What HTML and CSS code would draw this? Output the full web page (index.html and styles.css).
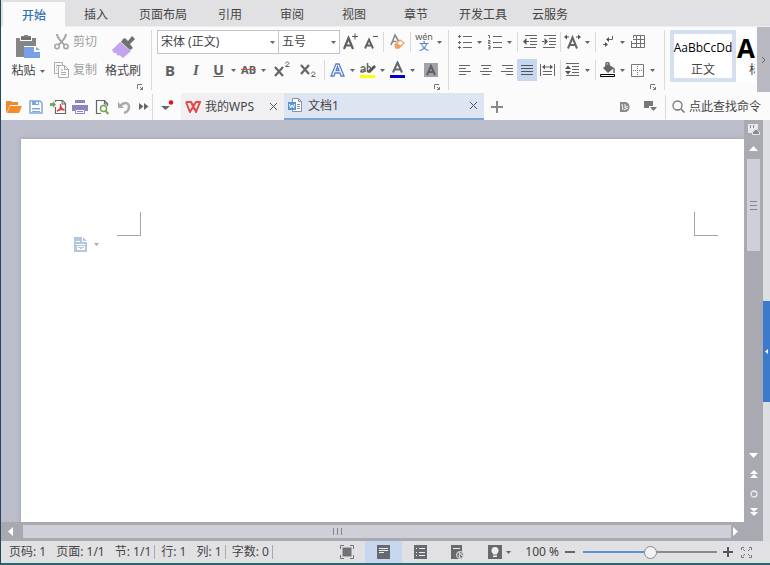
FILE: index.html
```html
<!DOCTYPE html>
<html lang="zh-CN">
<head>
<meta charset="utf-8">
<title>文档1</title>
<link rel="stylesheet" href="styles.css">
</head>
<body>
<svg class="defs" aria-hidden="true">
  <symbol id="caret" viewBox="0 0 5 3"><path d="M0 0h5L2.500 3z" fill="currentColor"/></symbol>
  <symbol id="launch" viewBox="0 0 6 6"><path d="M.5 5V.5H5M3 5.500H5.500V3M3 3l2.500 2.500" fill="none" stroke="#777"/></symbol>
  <symbol id="close" viewBox="0 0 9 9"><path d="M1 1l7 7M8 1L1 8" fill="none" stroke="#555"/></symbol>
</svg>

<nav class="tabs">
  <button class="tab active">开始</button>
  <button class="tab">插入</button>
  <button class="tab">页面布局</button>
  <button class="tab">引用</button>
  <button class="tab">审阅</button>
  <button class="tab">视图</button>
  <button class="tab">章节</button>
  <button class="tab">开发工具</button>
  <button class="tab">云服务</button>
</nav>

<section class="ribbon">
  <div class="group clipboard">
    <button class="big">
      <svg width="26" height="24" viewBox="0 0 26 24"><path d="M1 3h5V1h3V0h4v1h3v2h5v8H9v11H1z" fill="#858585"/><path d="M5 3h12v3H5z" fill="#fafafa"/><path d="M6 2h10v3H6z" fill="#707070"/><path d="M9 12h10l6 5v6H9z" fill="#78a0e8"/><path d="M19 11v6h6z" fill="#fff"/><path d="M21 12v3h4z" fill="#78a0e8"/></svg>
      <span class="label">粘贴 <svg class="caret"><use href="#caret"/></svg></span>
    </button>
    <div class="stack">
      <button class="small">
        <svg width="15" height="16" viewBox="0 0 15 16"><path d="M3 0c0 4 3 6 7.500 11M12 0c0 4-3 6-7.500 11" fill="none" stroke="#a3a3a3" stroke-width="2"/><circle cx="3" cy="12.500" r="2.200" fill="none" stroke="#a3a3a3" stroke-width="1.500"/><circle cx="12" cy="12.500" r="2.200" fill="none" stroke="#a3a3a3" stroke-width="1.500"/></svg>
        剪切
      </button>
      <button class="small">
        <svg width="15" height="16" viewBox="0 0 15 16"><path d="M4 11.500H.5V.5h8V3M4.500 3.500h6l4 4v8h-10zM10.500 3.500v4h4M7 8h2M7 10.500h5M7 12.500h5M2 3.500h4M2 5.500h1M2 8h1" fill="none" stroke="#aaa"/></svg>
        复制
      </button>
    </div>
    <button class="big">
      <svg width="24" height="24" viewBox="0 0 24 24"><path d="M12 4l2-1 3 3 4-5 3 3-5 5 3 4-3 2-9-8z" fill="#707070"/><path d="M9 7l11 9-8 7-4-3-1 1-2-3-2 0-2-3z" fill="#c3a5ee"/></svg>
      <span class="label">格式刷</span>
    </button>
    <button class="launcher" aria-label="剪贴板"><svg width="6" height="6"><use href="#launch"/></svg></button>
  </div>

  <div class="group font">
    <div class="row">
      <label class="combo family"><select aria-label="字体"><option>宋体 (正文)</option></select><svg class="caret"><use href="#caret"/></svg></label>
      <label class="combo size"><select aria-label="字号"><option>五号</option></select><svg class="caret"><use href="#caret"/></svg></label>
      <button class="tool" aria-label="增大字号"><svg width="16" height="18" viewBox="0 0 16 18"><path d="M2 16L6.500 5 11 16M3.500 12.500h6" fill="none" stroke="#606060" stroke-width="2.200"/><path d="M10 3.500h6M13 .5v6" stroke="#555"/></svg></button>
      <button class="tool" aria-label="减小字号"><svg width="16" height="18" viewBox="0 0 16 18"><path d="M3 15.500l4-9 4 9M4.500 12.500h5" fill="none" stroke="#606060" stroke-width="1.900"/><path d="M11 3.500h5" stroke="#555"/></svg></button>
      <i class="sep wide"></i>
      <button class="tool" aria-label="清除格式"><svg width="16" height="18" viewBox="0 0 16 18"><path d="M2 12L6 2l4 7M3.500 8.500h4" fill="none" stroke="#888" stroke-width="1.600"/><path d="M6 12l5-5 4 3-5 5-3 0z" fill="#fff" stroke="#eea060" stroke-width="1.300"/><path d="M6 12l2-2 4 3-2 2H7z" fill="#eea060"/></svg></button>
      <i class="sep wide"></i>
      <button class="tool pinyin"><span>wén</span><b>文</b></button>
      <button class="drop" aria-label="更多拼音"><svg class="caret"><use href="#caret"/></svg></button>
    </div>
    <div class="row">
      <button class="tool w26 bold">B</button>
      <button class="tool w26 italic">I</button>
      <button class="tool under">U</button>
      <button class="drop" aria-label="下划线"><svg class="caret"><use href="#caret"/></svg></button>
      <button class="tool strike">AB</button>
      <button class="drop" aria-label="删除线"><svg class="caret"><use href="#caret"/></svg></button>
      <button class="tool w26" aria-label="上标"><svg width="18" height="18" viewBox="0 0 18 18"><path d="M2 6l8 9M10 6l-8 9" stroke="#666" stroke-width="2.200"/><path d="M12.500 2.500c0-2 3.500-2 3.500 0 0 1-3.500 2-3.500 3H16.500" fill="none" stroke="#666"/></svg></button>
      <button class="tool w26" aria-label="下标"><svg width="18" height="18" viewBox="0 0 18 18"><path d="M2 4l8 9M10 4l-8 9" stroke="#666" stroke-width="2.200"/><path d="M12.500 12.500c0-2 3.500-2 3.500 0 0 1-3.500 2-3.500 3H16.500" fill="none" stroke="#666"/></svg></button>
      <i class="sep wide"></i>
      <button class="tool" aria-label="文字效果"><svg width="16" height="16" viewBox="0 0 16 16"><path d="M1 14L6 2h3l5 12h-3l-1-3H5l-1 3zM6 8.500h3L7.500 4.500z" fill="#fff" stroke="#557fce" stroke-width="1.300"/></svg></button>
      <button class="drop" aria-label="更多效果"><svg class="caret"><use href="#caret"/></svg></button>
      <button class="tool" aria-label="突出显示"><svg width="17" height="18" viewBox="0 0 17 18"><path d="M2 7c1-2 4-1.500 4 .5V11M6 8.500c-5 0-5 3-2.500 2.500 1.500 0 2.500-1 2.500-2M8.500 2v9M8.500 6c4-2 4 4 0 5" fill="none" stroke="#666" stroke-width="1.500"/><path d="M8 11l7-7 2 2-6 6z" fill="#555"/><path d="M1 14h15v3H1z" fill="#ff0"/></svg></button>
      <button class="drop" aria-label="突出显示颜色"><svg class="caret"><use href="#caret"/></svg></button>
      <button class="tool" aria-label="字体颜色"><svg width="17" height="18" viewBox="0 0 17 18"><path d="M4 11.500L8.500 1.500l4.500 10M5.500 8.500h6" fill="none" stroke="#666" stroke-width="2"/><path d="M1 14h15v3H1z" fill="#0000c8"/></svg></button>
      <button class="drop" aria-label="更多颜色"><svg class="caret"><use href="#caret"/></svg></button>
      <button class="tool w26" aria-label="字符底纹"><svg width="14" height="14" viewBox="0 0 14 14"><path d="M0 0h14v14H0z" fill="#a2a3a6"/><path d="M3 12l4-9 4 9M4.500 9h5" fill="none" stroke="#606064" stroke-width="2"/></svg></button>
    </div>
    <button class="launcher" aria-label="字体设置"><svg width="6" height="6"><use href="#launch"/></svg></button>
  </div>

  <div class="group para">
    <div class="row">
      <button class="tool" aria-label="项目符号"><svg width="16" height="16" viewBox="0 0 16 16"><path d="M6 2.500h9M6 8.500h9M6 13.500h9" stroke="#666"/><path d="M1 2.500h3M2.500 1v3M1 8.500h3M2.500 7v3M1 13.500h3M2.500 12v3" stroke="#666"/></svg></button>
      <button class="drop" aria-label="更多符号"><svg class="caret"><use href="#caret"/></svg></button>
      <button class="tool" aria-label="编号"><svg width="16" height="16" viewBox="0 0 16 16"><path d="M6 2.500h9M6 8.500h9M6 13.500h9" stroke="#666"/><path d="M1 1.500h1.500V4M1 6.500h2v1.500H1.500v1.500H3.500M1 11.500h2v3.500H1M1.500 13.500H3" fill="none" stroke="#666"/></svg></button>
      <button class="drop" aria-label="更多编号"><svg class="caret"><use href="#caret"/></svg></button>
      <i class="sep"></i>
      <button class="tool" aria-label="减少缩进"><svg width="14" height="14" viewBox="0 0 14 14"><path d="M2 .5h12M7 3.500h7M7 6.500h7M7 9.500h7M1 12.500h12" stroke="#666"/><path d="M0 6.500L3.500 3v7zM3 6h3v1H3z" fill="#555"/></svg></button>
      <button class="tool" aria-label="增加缩进"><svg width="14" height="14" viewBox="0 0 14 14"><path d="M2 .5h12M7 3.500h7M7 6.500h7M7 9.500h7M1 12.500h12" stroke="#666"/><path d="M6 6.500L2.500 3v7zM0 6h3v1H0z" fill="#555"/></svg></button>
      <i class="sep"></i>
      <button class="tool" aria-label="字符缩放"><svg width="17" height="16" viewBox="0 0 17 16"><path d="M4 14.500L8.500 3.500 13 14.500M5.500 11h6" fill="none" stroke="#666" stroke-width="2"/><path d="M0 3l3-2.500v5zM3 2.500h2v1H3zM17 3l-3-2.500v5zM12 2.500h2v1h-2z" fill="#555"/></svg></button>
      <button class="drop" aria-label="更多缩放"><svg class="caret"><use href="#caret"/></svg></button>
      <i class="sep"></i>
      <button class="tool" aria-label="显示标记"><svg width="12" height="14" viewBox="0 0 12 14"><path d="M10.500 1v3.500H6M1 9.500h4" fill="none" stroke="#666"/><path d="M4 4.500L7 2v5zM6 9.500L3 7v5z" fill="#555"/></svg></button>
      <button class="drop" aria-label="更多标记"><svg class="caret"><use href="#caret"/></svg></button>
      <button class="tool" aria-label="制表位"><svg width="14" height="14" viewBox="0 0 14 14"><path d="M2.500 3V.5h11v12H1M5.500 .5v12M9.500 .5v12M2 4.500h11.500M.5 8.500h13M.5 6v7" fill="none" stroke="#707070"/></svg></button>
    </div>
    <div class="row">
      <button class="tool w20" aria-label="左对齐"><svg width="14" height="12" viewBox="0 0 14 12"><path d="M1 1.500h11M1 4.500h7M1 7.500h12M1 10.500h7" stroke="#666"/></svg></button>
      <button class="tool w21" aria-label="居中"><svg width="14" height="12" viewBox="0 0 14 12"><path d="M2 1.500h10M4 4.500h6M1 7.500h12M3 10.500h8" stroke="#666"/></svg></button>
      <button class="tool w21" aria-label="右对齐"><svg width="14" height="12" viewBox="0 0 14 12"><path d="M2 1.500h11M6 4.500h7M1 7.500h12M6 10.500h7" stroke="#666"/></svg></button>
      <button class="tool w20 on" aria-label="两端对齐"><svg width="14" height="12" viewBox="0 0 14 12"><path d="M1 1.500h12M1 4.500h12M1 7.500h12M1 10.500h12" stroke="#555"/></svg></button>
      <button class="tool w21" aria-label="分散对齐"><svg width="15" height="12" viewBox="0 0 15 12"><path d="M.5 0v12M14.500 0v12M3 7.500h9M3 10.500h9M4 3h7" stroke="#666"/><path d="M2 3l3-2.500v5zM13 3l-3-2.500v5z" fill="#555"/></svg></button>
      <i class="sep"></i>
      <button class="tool" aria-label="行距"><svg width="15" height="14" viewBox="0 0 15 14"><path d="M1 .5h13M7 3.500h7M7 6.500h7M7 9.500h7M1 12.500h13" stroke="#666"/><path d="M0 6l3-3.500L6 6zM0 8h6l-3 3.500z" fill="#555"/></svg></button>
      <button class="drop" aria-label="更多行距"><svg class="caret"><use href="#caret"/></svg></button>
      <i class="sep"></i>
      <button class="tool" aria-label="底纹颜色"><svg width="16" height="16" viewBox="0 0 16 16"><path d="M3 6l5-4 6 4-6 5z" fill="#666"/><path d="M6 5V2c0-2 3-2 3 0v3M14 6v5" fill="none" stroke="#666" stroke-width="1.500"/><path d="M.5 12.500h14v2H.5z" fill="#fff" stroke="#000"/></svg></button>
      <button class="drop" aria-label="更多底纹"><svg class="caret"><use href="#caret"/></svg></button>
      <button class="tool" aria-label="边框"><svg width="13" height="13" viewBox="0 0 13 13"><path d="M.5.5h12v12H.5z" fill="none" stroke="#777"/><path d="M6.500 2v9M2 6.500h9" stroke="#777" stroke-dasharray="1 1"/></svg></button>
      <button class="drop" aria-label="更多边框"><svg class="caret"><use href="#caret"/></svg></button>
    </div>
    <button class="launcher" aria-label="段落设置"><svg width="6" height="6"><use href="#launch"/></svg></button>
  </div>

  <div class="styles">
    <button class="style selected"><span class="sample">AaBbCcDd</span><span>正文</span></button>
    <button class="style title"><span class="sample">A</span><span class="name">标题</span></button>
  </div>
  <button class="more" aria-label="更多"><svg width="5" height="8" viewBox="0 0 5 8"><path d="M1 1l3 3-3 3" fill="none" stroke="#666"/></svg></button>
</section>

<section class="quick">
  <button aria-label="打开"><svg width="16" height="14" viewBox="0 0 16 14"><path d="M0 13V1h5l1 1h6v3H4L1 12z" fill="#ee8a2b"/><path d="M4 6h12l-3 7H1z" fill="#f28c2c"/></svg></button>
  <button aria-label="保存"><svg width="14" height="14" viewBox="0 0 14 14"><path d="M1 1h10l2 2v10H1z" fill="#fff" stroke="#82a6dc" stroke-width="1.500"/><path d="M3 1h7v4H3zM3 8h8v1.500H3zM3 11h8v1H3z" fill="#82a6dc"/><path d="M7 2h2v2H7z" fill="#fff"/></svg></button>
  <button aria-label="输出为PDF"><svg width="17" height="16" viewBox="0 0 17 16"><path d="M5.500 3V1.500h7l3 3v10h-10V8" fill="#fff" stroke="#666" stroke-width="1.200"/><path d="M12 1v4h4" fill="none" stroke="#666"/><path d="M0 4h3V2l3 3.500L3 9V7H0z" fill="#74a558"/><path d="M7 12c3-1 4-4 3.500-7 0 3 1 5 4 6-3-1-5-.5-7.500 1z" fill="none" stroke="#e03c3c" stroke-width="1.400"/></svg></button>
  <button aria-label="打印"><svg width="16" height="14" viewBox="0 0 16 14"><path d="M3 0h10v3H3zM0 5h16v6h-3V9H3v2H0z" fill="#8e82c5"/><path d="M3.500 9.500h9v4h-9z" fill="#fff" stroke="#8e82c5"/><path d="M5 11.500h6" stroke="#8e82c5"/></svg></button>
  <button aria-label="打印预览"><svg width="15" height="16" viewBox="0 0 15 16"><path d="M6 14.500H1.500V1.500h8l3 3V7M9.500 1v4H13" fill="none" stroke="#666" stroke-width="1.200"/><circle cx="8.500" cy="9.500" r="3" fill="#fff" stroke="#70a850" stroke-width="1.500"/><path d="M10.500 12l3 3" stroke="#70a850" stroke-width="2"/></svg></button>
  <button aria-label="撤销"><svg width="14" height="14" viewBox="0 0 14 14"><path d="M3 6c5-5 9-3 9 1 0 3-2 5-5 6" fill="none" stroke="#aaa" stroke-width="2.500"/><path d="M1 2v6h6z" fill="#aaa"/></svg></button>
  <button class="narrow" aria-label="更多命令"><svg width="10" height="7" viewBox="0 0 10 7"><path d="M0 0l4.500 3.500L0 7zM5 0l4.500 3.500L5 7z" fill="#666"/></svg></button>
  <i class="sep"></i>
  <button class="notice" aria-label="自定义"><svg width="14" height="14" viewBox="0 0 14 14"><path d="M1 6h9L5.500 10z" fill="#666"/><circle cx="11" cy="2.500" r="2.200" fill="#e80c14"/></svg></button>
  <div class="doc home"><svg width="16" height="12" viewBox="0 0 16 12"><path d="M1 1h5l3.500 7.500M1 1l4 10L11 1h4l-4 10L7 2" fill="none" stroke="#e34a4f" stroke-width="2"/></svg><a href="#">我的WPS</a><button class="x" aria-label="关闭我的WPS"><svg width="9" height="9"><use href="#close"/></svg></button></div>
  <div class="doc current"><svg width="15" height="15" viewBox="0 0 15 15"><path d="M4.500 4V.5h6l3 3v10h-9V12M10.500 .5v3h3M9 6.500h3M9 8.500h3M9 10.500h3" fill="#fff" stroke="#8592a5"/><path d="M0 4h8v8H0z" fill="#5a94d4"/><path d="M1.500 6l1 4L4 7l1.500 3 1-4" fill="none" stroke="#fff"/></svg><a href="#">文档1</a><button class="x" aria-label="关闭文档1"><svg width="9" height="9"><use href="#close"/></svg></button></div>
  <button class="add" aria-label="新建"><svg width="12" height="12" viewBox="0 0 12 12"><path d="M0 6h12M6 0v12" stroke="#888" stroke-width="2"/></svg></button>
  <div class="search">
    <button class="mini" aria-label="云文档"><svg width="10" height="10" viewBox="0 0 10 10"><path d="M0 0h5c6 0 6 10 0 10H0z" fill="#888"/><path d="M2 2l1 6M5 2v4l3-2M4 8l4-2" fill="none" stroke="#fff"/></svg></button>
    <button class="mini" aria-label="界面"><svg width="13" height="11" viewBox="0 0 13 11"><path d="M0 0h9v5H5v2H0zM6 6h7l-3.500 4z" fill="#777"/></svg></button>
    <i class="sep"></i>
    <svg width="13" height="13" viewBox="0 0 13 13"><circle cx="5.500" cy="5.500" r="4.500" fill="none" stroke="#777" stroke-width="1.300"/><path d="M9 9l3.500 3.500" stroke="#777" stroke-width="1.500"/></svg>
    <a href="#">点此查找命令</a>
  </div>
</section>

<main class="work">
  <div class="pane">
    <div class="view">
      <div class="canvas">
        <article class="page">
          <div class="corners"><i class="corner left"></i><i class="corner right"></i></div>
          <button class="paste" aria-label="段落布局"><svg width="13" height="15" viewBox="0 0 13 15"><path d="M0 0h9l4 4v11H0z" fill="#b5c7dc"/><path d="M8.500 0v4.500H13M2 4.500h4M2 7.500h9M4 11.500h2M8 11.500h3" fill="none" stroke="#fff"/><path d="M3.500 9.500h7v3h-7z" fill="none" stroke="#fff"/></svg><svg class="caret"><use href="#caret"/></svg></button>
        </article>
      </div>
      <div class="vbar">
        <button aria-label="标尺"><svg width="12" height="11" viewBox="0 0 12 11"><path d="M0 0h10v5H8L5 7v2H0z" fill="#e8e8ee"/><path d="M2.500 1v3M5.500 1v3" stroke="#888"/><path d="M8 5l3.500 3v2.500h-7V8z" fill="#888" stroke="#e8e8ee"/></svg></button>
        <button aria-label="向上"><svg width="9" height="5" viewBox="0 0 9 5"><path d="M0 5h9L4.500 0z" fill="#fff"/></svg></button>
        <div class="vthumb"><svg width="7" height="9" viewBox="0 0 7 9"><path d="M0 .5h7M0 4.500h7M0 8.500h7" stroke="#85868c"/></svg></div>
        <div class="vend">
          <button aria-label="向下"><svg width="9" height="5" viewBox="0 0 9 5"><path d="M0 0h9L4.500 5z" fill="#fff"/></svg></button>
          <button aria-label="上一页"><svg width="8" height="9" viewBox="0 0 8 9"><path d="M0 4h8L4 0zM0 8h8L4 4z" fill="#fff"/></svg></button>
          <button aria-label="选择浏览对象"><svg width="8" height="8" viewBox="0 0 8 8"><circle cx="4" cy="4" r="3" fill="none" stroke="#eee" stroke-width="1.300"/></svg></button>
          <button aria-label="下一页"><svg width="8" height="9" viewBox="0 0 8 9"><path d="M0 0h8L4 4zM0 4h8L4 8z" fill="#fff"/></svg></button>
        </div>
      </div>
    </div>
    <div class="hbar">
      <button aria-label="向左"><svg width="5" height="9" viewBox="0 0 5 9"><path d="M5 0v9L0 4.500z" fill="#fff"/></svg></button>
      <div class="hthumb"><svg width="9" height="7" viewBox="0 0 9 7"><path d="M.5 0v7M4.500 0v7M8.500 0v7" stroke="#85868c"/></svg></div>
      <button class="next" aria-label="向右"><svg width="5" height="9" viewBox="0 0 5 9"><path d="M0 0v9l5-4.500z" fill="#fff"/></svg></button>
    </div>
  </div>
  <aside class="side"><button aria-label="展开任务窗格"><svg width="3" height="5" viewBox="0 0 3 5"><path d="M3 0v5L0 2.500z" fill="#fff"/></svg></button></aside>
</main>

<footer class="status">
  <div class="info">
    <span>页码: 1</span><span>页面: 1/1</span><span class="end">节: 1/1</span><span>行: 1</span><span class="end">列: 1</span><span class="end">字数: 0</span>
  </div>
  <div class="modes">
    <button aria-label="全屏显示"><svg width="14" height="14" viewBox="0 0 14 14"><path d="M2.500 2.500h9v9h-9z" fill="#707274"/><path d="M.5 4V.5H4M10 .5h3.500V4M.5 10v3.500H4M10 13.500h3.500V10" fill="none" stroke="#707274"/></svg></button>
    <button class="on" aria-label="页面视图"><svg width="13" height="14" viewBox="0 0 13 14"><path d="M0 0h13v14H0z" fill="#66696e"/><path d="M2 3.500h9M2 5.500h9M2 7.500h5" stroke="#eee"/></svg></button>
    <button aria-label="大纲视图"><svg width="13" height="14" viewBox="0 0 13 14"><path d="M0 0h13v14H0z" fill="#66696e"/><path d="M2 3.500h1M5 3.500h6M2 7.500h1M5 7.500h6M2 10.500h1M5 10.500h6" stroke="#eee"/></svg></button>
    <button aria-label="Web视图"><svg width="14" height="14" viewBox="0 0 14 14"><path d="M0 0h11v14H0z" fill="#66696e"/><path d="M2 3.500h7" stroke="#eee"/><circle cx="9" cy="10" r="3.500" fill="#707274" stroke="#e5e5e7"/><path d="M8 7l1 2-1 1 1 3M10 8v2l2 1" fill="none" stroke="#eee"/></svg></button>
    <button aria-label="护眼模式"><svg width="14" height="14" viewBox="0 0 14 14"><path d="M0 0h14v14H0z" fill="#66696e"/><circle cx="7" cy="5.500" r="3.500" fill="#eee"/><path d="M5 8h4v4H5z" fill="#eee"/><path d="M5 10h4" stroke="#66696e"/></svg></button>
  </div>
  <div class="zoom">
    <svg class="caret"><use href="#caret"/></svg>
    <label for="zoom">100 %</label>
    <button aria-label="缩小"><svg width="10" height="10" viewBox="0 0 10 10"><path d="M0 5h10" stroke="#666" stroke-width="2"/></svg></button>
    <input id="zoom" type="range" min="0" max="200" value="100">
    <button aria-label="放大"><svg width="10" height="10" viewBox="0 0 10 10"><path d="M0 5h10M5 0v10" stroke="#555" stroke-width="2"/></svg></button>
    <button class="fit" aria-label="适应窗口"><svg width="11" height="11" viewBox="0 0 11 11"><path d="M.5 3V.5H3M8 .5h2.500V3M.5 8v2.500H3M8 10.500h2.500V8M2 2l2 2M9 2L7 4M2 9l2-2M9 9L7 7" fill="none" stroke="#777"/></svg></button>
  </div>
</footer>
</body>
</html>
```

FILE: styles.css
```css
* { box-sizing: border-box; }

body {
  margin: 0;
  height: 100vh;
  display: flex;
  flex-direction: column;
  overflow: hidden;
  border-left: 1px solid #1f4766;
  border-bottom: 2px solid #2b6670;
  background: #fbfbfc;
  color: #444;
  font: 12px/16px "Noto Sans", "Noto Sans CJK SC", sans-serif;
}

button, select, input { font: inherit; color: inherit; margin: 0; }
button {
  display: flex;
  align-items: center;
  justify-content: center;
  padding: 0;
  border: 0;
  background: none;
}
a { color: inherit; text-decoration: none; white-space: nowrap; }
svg { display: block; flex: none; }
.defs { display: none; }
.caret { width: 5px; height: 3px; color: #666; }

/* Ribbon tabs */
.tabs {
  display: flex;
  flex: none;
  height: 27px;
  padding: 2px 2px 0;
  background: #e1e0e3;
  border-bottom: 1px solid #eeeef0;
}
.tab { min-width: 62px; padding: 2px 12px 0; }
.tab.active { background: #fbfbfc; color: #3271b8; font-weight: 500; height: 25px; }

/* Ribbon */
.ribbon { display: flex; flex: none; height: 66px; }
.group {
  position: relative;
  flex: none;
  margin: 3px 0;
  border-right: 1px solid #dadade;
}
.row { display: flex; align-items: center; height: 24px; margin-bottom: 4px; }
.launcher { position: absolute; right: 8px; bottom: 0; }

.clipboard { display: flex; width: 151px; padding-left: 9px; }
.big { flex-direction: column; justify-content: flex-start; gap: 4px; padding-top: 5px; width: 36px; }
.big .label { display: flex; align-items: center; gap: 4px; white-space: nowrap; }
.stack { display: flex; flex-direction: column; gap: 4px; width: 59px; padding-left: 8px; }
.small { height: 24px; gap: 4px; justify-content: flex-start; color: #a0a0a0; white-space: nowrap; }

.font { width: 297px; padding-left: 5px; }
.para { width: 216px; padding-left: 6px; }
.combo { display: flex; align-items: center; height: 24px; border: 1px solid #c4c4c8; background: #fff; }
.combo + .combo { border-left: 0; }
.combo select {
  flex: 1;
  min-width: 0;
  padding: 0 0 0 3px;
  border: 0;
  appearance: none;
  background: none;
  outline: none;
}
.combo .caret { margin-right: 3px; }
.family { width: 122px; }
.size { width: 61px; }

.tool { width: 19px; height: 22px; flex: none; color: #606060; }
.font .combo ~ .tool { width: 20px; }
.drop { width: 11px; height: 22px; flex: none; }
.w20 { width: 20px; }
.w21 { width: 21px; }
.w26 { width: 26px; }
.on { background: #c8d7f0; }
.sep { flex: none; width: 1px; height: 20px; margin: 0 2px; background: #dadade; }
.sep.wide { margin: 0 3px; }
.bold { font: bold 15px/20px "Noto Sans", sans-serif; }
.italic { font: italic bold 15px/20px "Liberation Serif", serif; }
.under { font: bold 14px/20px "Noto Sans", sans-serif; text-decoration: underline; }
.strike { font: bold 11px/20px "Noto Sans", sans-serif; text-decoration: line-through #d05050; }
.pinyin { flex-direction: column; font-size: 9px; line-height: 9px; }
.pinyin b { color: #5a82d0; font-weight: 500; font-size: 10px; line-height: 11px; }

.styles { display: flex; flex: 1; min-width: 0; overflow: hidden; margin: 3px 2px 11px 5px; }
.style {
  flex: none;
  flex-direction: column;
  justify-content: flex-start;
  width: 66px;
  border: 4px solid #fff;
  background: #fff;
}
.style.selected { border-color: #d6def2; }
.sample { font: 12px/28px "Open Sans", sans-serif; color: #000; }
.style.title { align-items: flex-start; border-width: 4px 1px; }
.title .sample { font-weight: bold; font-size: 26px; }
.title .name { padding-left: 12px; }
.more { flex: none; width: 13px; margin-bottom: 1px; background: #b8b9c2; }

/* Quick access and document tabs */
.quick { display: flex; flex: none; align-items: center; height: 27px; padding-left: 2px; }
.quick > button { width: 22px; height: 26px; flex: none; }
.quick > .narrow { width: 17px; }
.quick > .sep { height: 26px; margin: 0; }
.quick > .notice { width: 28px; }
.doc { display: flex; align-items: center; flex: none; gap: 4px; height: 27px; padding: 0 6px 0 4px; }
.home { width: 103px; background: #f0f0f2; }
.current { width: 200px; gap: 5px; background: #dde4f2; border-bottom: 2px solid #79a4d3; }
.x { width: 9px; height: 9px; margin-left: auto; }
.quick > .add { width: 26px; }
.search { display: flex; align-items: center; margin-left: auto; padding-right: 9px; gap: 4px; }
.search .mini { width: 21px; height: 22px; }
.search .sep { height: 24px; margin: 0 2px 0 0; }

/* Document workspace */
.work { display: flex; flex: 1; min-height: 0; }
.pane { display: flex; flex: 1; flex-direction: column; min-width: 0; }
.view { display: flex; flex: 1; min-height: 0; }
.canvas { flex: 1; display: flex; padding: 19px 0 0 20px; background: #bbbdca; }
.page { flex: 1; padding: 73px 26px 0 53px; background: #fff; box-shadow: 0 0 4px #9799a5; clip-path: inset(-5px 0 0 -5px); }
.corners { display: flex; justify-content: space-between; padding-left: 43px; }
.corner { width: 24px; height: 24px; border-bottom: 1px solid #a5a5a8; }
.corner.left { border-right: 1px solid #a5a5a8; }
.corner.right { border-left: 1px solid #a5a5a8; }
.paste { gap: 7px; margin-top: 1px; }
.paste .caret { color: #aaa; }

.vbar { display: flex; flex-direction: column; flex: none; width: 19px; background: #a8a9b1; }
.vbar button { height: 19px; flex: none; }
.vthumb { display: flex; align-items: center; justify-content: center; height: 92px; margin: 1px 3px; background: #cfcfd8; }
.vend { display: flex; flex-direction: column; margin-top: auto; }
.hbar { display: flex; flex: none; height: 19px; padding: 3px 23px 3px 0; background: #a8a9b1; }
.hbar button { width: 22px; padding-right: 4px; }
.hbar .next { width: 9px; padding: 0; }
.hthumb { display: flex; align-items: center; flex: 1; padding-left: 42%; background: #cfcfd8; }
.side { display: flex; align-items: center; flex: none; width: 7px; background: #dddee1; padding-top: 42px; }
.side button { width: 7px; height: 101px; background: #3c7bcb; }

/* Status bar */
.status { display: flex; flex: none; align-items: center; height: 22px; background: #e1e1e3; }
.info { display: flex; align-items: center; flex: 1; padding-left: 8px; gap: 10px; white-space: nowrap; }
.info .end { padding-right: 3px; border-right: 1px solid #aaa; line-height: 14px; margin-right: -4px; }
.modes { display: flex; }
.modes button { width: 37px; height: 22px; }
.zoom { display: flex; align-items: center; flex: none; padding-right: 18px; }
.modes + .zoom { margin-left: -7px; }
.zoom label { margin: 0 6px 0 14px; white-space: nowrap; }
.zoom input {
  appearance: none;
  width: 134px;
  height: 14px;
  margin: 0 6px 0 8px;
  background: linear-gradient(90deg, #5e91d2 50%, #8b8b8e 50%) center / 100% 2px no-repeat;
}
.zoom input::-webkit-slider-thumb {
  appearance: none;
  width: 13px;
  height: 13px;
  border: 1px solid #8b8b8e;
  border-radius: 50%;
  background: #f3f3f4;
}
.zoom .fit { margin-left: 8px; }
```
